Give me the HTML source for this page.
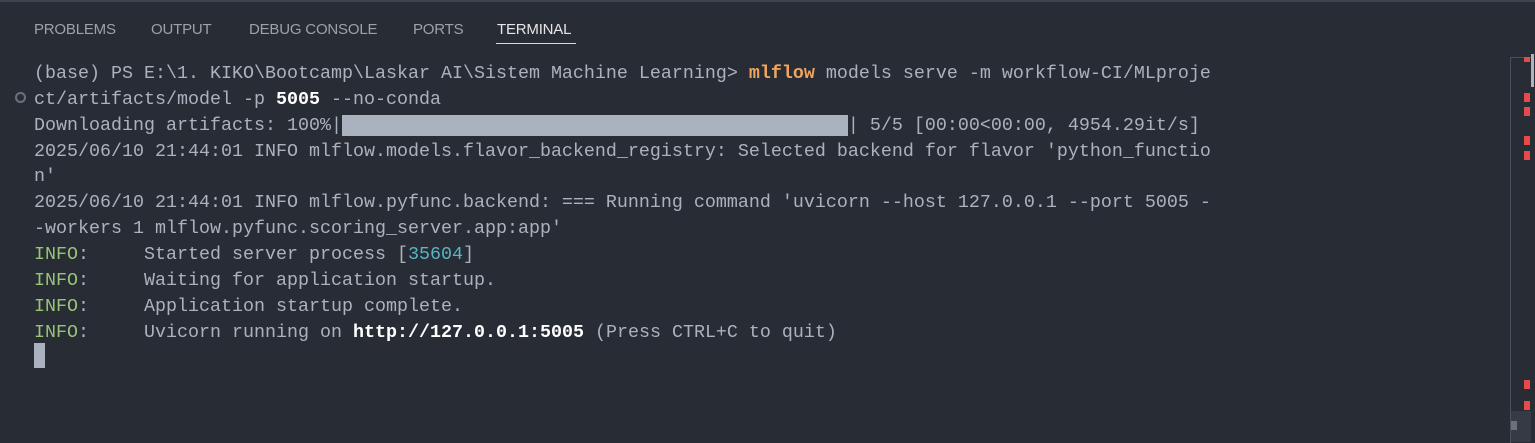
<!DOCTYPE html>
<html><head><meta charset="utf-8"><style>
html,body{margin:0;padding:0;width:1535px;height:442px;overflow:hidden;background:#282c34;}
.top{position:absolute;left:0;top:0;width:1535px;height:2px;background:#3e4452;}
.tab{position:absolute;top:21px;font:15px "Liberation Sans",sans-serif;color:#9da1a9;letter-spacing:-0.2px;}
.ul{position:absolute;left:496px;top:43px;width:80px;height:1px;background:#d7dae0;}
.ln{position:absolute;left:34px;font:18.33px/26px "Liberation Mono",monospace;color:#abb2bf;white-space:pre;}
.g{color:#98c379}.c{color:#56b6c2}.o{color:#f0a45d;font-weight:bold}.w{color:#ffffff;font-weight:bold}
.bar{background:#abb2bf}
.m{position:absolute;left:1524px;width:6px;height:9px;background:#e84a4a;}
</style></head><body>
<div class="top"></div>
<div class="tab" style="left:34px">PROBLEMS</div>
<div class="tab" style="left:151px">OUTPUT</div>
<div class="tab" style="left:249px">DEBUG CONSOLE</div>
<div class="tab" style="left:413px">PORTS</div>
<div class="tab" style="left:497px;color:#e6e6e6">TERMINAL</div>
<div class="ul"></div>
<div style="position:absolute;left:15px;top:92px;width:7px;height:7px;border:2px solid #6b717c;border-radius:50%"></div>
<div class="ln" style="top:61px">(base) PS E:\1. KIKO\Bootcamp\Laskar AI\Sistem Machine Learning&gt; <span class="o">mlflow</span> models serve -m workflow-CI/MLproje</div>
<div class="ln" style="top:87px">ct/artifacts/model -p <span class="w">5005</span> --no-conda</div>
<div class="ln" style="top:113px">Downloading artifacts: 100%|<span class="bar">                                              </span>| 5/5 [00:00&lt;00:00, 4954.29it/s]</div>
<div class="ln" style="top:139px">2025/06/10 21:44:01 INFO mlflow.models.flavor_backend_registry: Selected backend for flavor 'python_functio</div>
<div class="ln" style="top:164px">n'</div>
<div class="ln" style="top:190px">2025/06/10 21:44:01 INFO mlflow.pyfunc.backend: === Running command 'uvicorn --host 127.0.0.1 --port 5005 -</div>
<div class="ln" style="top:216px">-workers 1 mlflow.pyfunc.scoring_server.app:app'</div>
<div class="ln" style="top:242px"><span class="g">INFO</span>:     Started server process [<span class="c">35604</span>]</div>
<div class="ln" style="top:268px"><span class="g">INFO</span>:     Waiting for application startup.</div>
<div class="ln" style="top:294px"><span class="g">INFO</span>:     Application startup complete.</div>
<div class="ln" style="top:320px"><span class="g">INFO</span>:     Uvicorn running on <span class="w">http://127.0.0.1:5005</span> (Press CTRL+C to quit)</div>
<div style="position:absolute;left:34px;top:343px;width:11px;height:25px;background:#abb2bf"></div>
<div style="position:absolute;left:1510px;top:57px;width:21px;height:385px;border-left:1px solid #4b515c;border-top:1px solid #4b515c;"></div>
<div style="position:absolute;left:1531px;top:54px;width:3px;height:33px;background:#b0b4ba"></div>
<div class="m" style="top:57px;height:5px"></div>
<div class="m" style="top:93px"></div>
<div class="m" style="top:107px"></div>
<div class="m" style="top:136px"></div>
<div class="m" style="top:151px"></div>
<div class="m" style="top:380px"></div>
<div class="m" style="top:401px"></div>
<div style="position:absolute;left:1511px;top:411px;width:20px;height:31px;background:#363a44"></div>
<div style="position:absolute;left:1511px;top:421px;width:6px;height:9px;background:#6b707a"></div>
</body></html>
